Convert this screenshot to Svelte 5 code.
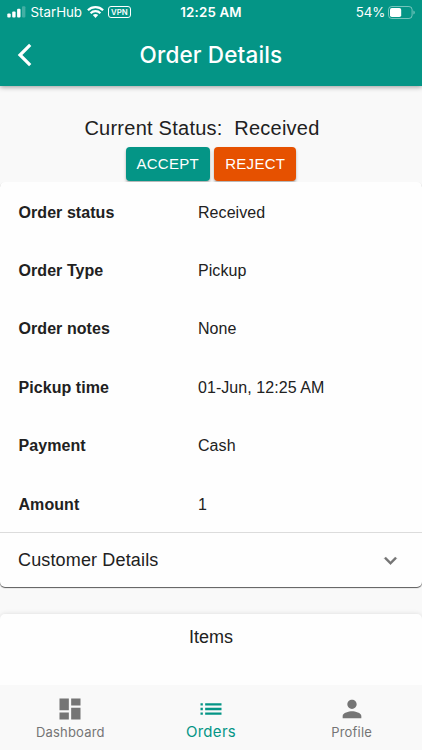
<script>
  const order = [
    { label: 'Order status', value: 'Received' },
    { label: 'Order Type', value: 'Pickup' },
    { label: 'Order notes', value: 'None' },
    { label: 'Pickup time', value: '01-Jun, 12:25 AM' },
    { label: 'Payment', value: 'Cash' },
    { label: 'Amount', value: '1' },
  ];

  let status = $state('Received');
</script>

<div class="app">
  <header>
    <div class="statusbar">
      <div class="carrier">
        <svg class="signal" width="19" height="12" viewBox="0 0 19 12" fill="#fff">
          <rect x="0.3" y="7.6" width="3.4" height="4" rx="1" />
          <rect x="5.2" y="5.4" width="3.4" height="6.2" rx="1" />
          <rect x="10.1" y="2.8" width="3.4" height="8.8" rx="1" />
          <rect x="15" y="0.2" width="3.4" height="11.4" rx="1" opacity="0.25" />
        </svg>
        <span class="network">StarHub</span>
        <svg class="wifi" width="17" height="12" viewBox="0 0 17 12" fill="none" stroke="#fff" stroke-width="2.2">
          <path d="M0.9 4.3C5.1 .1 11.9 .1 16.1 4.3" />
          <path d="M3.6 7.2C6.3 4.5 10.7 4.5 13.4 7.2" />
          <path d="M5.8 9.1L8.5 11.9L11.2 9.1C9.7 7.7 7.3 7.7 5.8 9.1Z" fill="#fff" stroke="none" />
        </svg>
        <span class="vpn">VPN</span>
      </div>
      <span class="clock">12:25 AM</span>
      <div class="battery">
        <span>54%</span>
        <svg width="28" height="13" viewBox="0 0 28 13">
          <rect x="0.5" y="0.5" width="23.6" height="12" rx="3.2" fill="none" stroke="#fff" stroke-opacity="0.45" />
          <rect x="2" y="2" width="11.2" height="9" rx="1.8" fill="#fff" />
          <path d="M25.4 4.4C27.3 5.1 27.3 7.9 25.4 8.6Z" fill="#fff" fill-opacity="0.45" />
        </svg>
      </div>
    </div>
    <div class="toolbar">
      <button class="back" aria-label="Back">
        <svg width="16" height="24" viewBox="0 0 16 24" fill="none" stroke="#fff" stroke-width="3.2">
          <path d="M13.2 1.8L3 12L13.2 22.2" />
        </svg>
      </button>
      <h1>Order Details</h1>
    </div>
  </header>

  <main>
    <section class="current">
      <h2>Current Status:&nbsp; {status}</h2>
      <div class="actions">
        <button class="accept" onclick={() => (status = 'Accepted')}>ACCEPT</button>
        <button class="reject" onclick={() => (status = 'Rejected')}>REJECT</button>
      </div>
    </section>

    <section class="card details">
      <dl>
        {#each order as row}
          <div class="row">
            <dt>{row.label}</dt>
            <dd>{row.value}</dd>
          </div>
        {/each}
      </dl>
      <div class="customer">
        <span>Customer Details</span>
        <svg width="25" height="25" viewBox="0 0 24 24" fill="#757575" stroke="#757575" stroke-width="0.4">
          <path d="M16.59 8.59L12 13.17 7.41 8.59 6 10l6 6 6-6z" />
        </svg>
      </div>
    </section>

    <section class="card items">
      <h3>Items</h3>
    </section>
  </main>

  <nav>
    <a href="#dashboard">
      <svg width="28" height="28" viewBox="0 0 24 24" fill="currentColor">
        <path d="M3 13h8V3H3v10zm0 8h8v-6H3v6zm10 0h8V11h-8v10zm0-18v6h8V3h-8z" />
      </svg>
      <span>Dashboard</span>
    </a>
    <a href="#orders" class="active">
      <svg width="28" height="28" viewBox="0 0 24 24" fill="currentColor">
        <path d="M3 13h2v-2H3v2zm0 4h2v-2H3v2zm0-8h2V7H3v2zm4 4h14v-2H7v2zm0 4h14v-2H7v2zM7 7v2h14V7H7z" />
      </svg>
      <span>Orders</span>
    </a>
    <a href="#profile">
      <svg width="28" height="28" viewBox="0 0 24 24" fill="currentColor">
        <path d="M12 12c2.21 0 4-1.79 4-4s-1.79-4-4-4-4 1.79-4 4 1.79 4 4 4zm0 2c-2.67 0-8 1.34-8 4v2h16v-2c0-2.66-5.33-4-8-4z" />
      </svg>
      <span>Profile</span>
    </a>
  </nav>
</div>

<style>
  :global(body) {
    margin: 0;
  }

  .app {
    display: flex;
    flex-direction: column;
    height: 750px;
    overflow: hidden;
    background: #f9f9f9;
    color: #212121;
    font-family: "Liberation Sans", Arial, sans-serif;
  }

  h1, h2, h3, dl, dd {
    margin: 0;
    font-weight: 400;
  }

  button {
    border: 0;
    padding: 0;
    font-family: inherit;
    color: #fff;
  }

  header {
    flex: none;
    height: 85.5px;
    background: #049586;
    color: #fff;
    font-family: Inter, sans-serif;
    box-shadow: 0 1px 5px rgba(0, 0, 0, 0.4);
  }

  .statusbar {
    display: grid;
    grid-template-columns: 1fr auto 1fr;
    align-items: center;
    height: 24px;
    padding: 0 6px 0 7px;
    font-size: 13.3px;
  }

  .carrier {
    display: flex;
    align-items: center;
  }

  .network {
    margin: 0 5px 0 4.5px;
  }

  .vpn {
    margin-left: 4px;
    padding: 0 2px;
    border: 1px solid #fff;
    border-radius: 3px;
    font-size: 7.8px;
    line-height: 10px;
    font-weight: 600;
  }

  .clock {
    margin-left: -1px;
    font-weight: 600;
    letter-spacing: 0.2px;
  }

  .battery {
    display: flex;
    align-items: center;
    justify-content: flex-end;
    gap: 3px;
  }

  .battery span {
    letter-spacing: -0.2px;
  }

  .toolbar {
    display: grid;
    grid-template-columns: 60px 1fr 60px;
    align-items: center;
    height: 61px;
  }

  .back {
    display: flex;
    padding-left: 17px;
    background: none;
  }

  h1 {
    text-align: center;
    font-size: 22.5px;
    font-weight: 500;
    letter-spacing: 0.15px;
  }

  main {
    flex: 1;
    display: flex;
    flex-direction: column;
    min-height: 0;
  }

  .current {
    height: 96.5px;
    box-sizing: border-box;
    padding-top: 30px;
    text-align: center;
  }

  h2 {
    margin-right: 18px;
    font-size: 20px;
    line-height: 25px;
    letter-spacing: 0.25px;
  }

  .actions {
    display: flex;
    justify-content: center;
    gap: 4.5px;
    padding-top: 6px;
  }

  .actions button {
    height: 34px;
    border-radius: 4px;
    font-size: 15px;
    letter-spacing: 0.3px;
    box-shadow: 0 2px 3px rgba(0, 0, 0, 0.3);
  }

  .accept {
    width: 84px;
    background: #049586;
  }

  .reject {
    width: 82px;
    background: #e65100;
  }

  .card {
    background: #fefefe;
    border-radius: 5px;
  }

  .details {
    box-shadow: 0 1px 1px rgba(0, 0, 0, 0.65);
  }

  .row {
    display: grid;
    grid-template-columns: 179.5px 1fr;
    align-items: center;
    box-sizing: border-box;
    height: 58.4px;
    padding: 3px 0 0 18.5px;
    font-size: 16px;
    letter-spacing: 0.06px;
  }

  dt {
    font-weight: 700;
  }

  .customer {
    display: flex;
    align-items: center;
    justify-content: space-between;
    height: 54px;
    padding: 0 19.5px 0 18px;
    border-top: 1px solid #dcdcdc;
    font-size: 18px;
    letter-spacing: 0.15px;
  }

  .items {
    flex: 1;
    margin-top: 27px;
    border-radius: 5px 5px 0 0;
    box-shadow: 0 0 5px rgba(0, 0, 0, 0.12);
  }

  h3 {
    padding-top: 12px;
    text-align: center;
    font-size: 18px;
    line-height: 22px;
  }

  nav {
    flex: none;
    display: grid;
    grid-template-columns: repeat(3, 1fr);
    height: 65px;
    background: #f9f9f9;
    font-family: Inter, sans-serif;
    position: relative;
  }

  nav a {
    display: flex;
    flex-direction: column;
    align-items: center;
    padding-top: 10px;
    color: #757575;
    font-size: 13px;
    line-height: 18px;
    letter-spacing: 0.2px;
    text-decoration: none;
  }

  nav .active {
    color: #049586;
    font-size: 15px;
    line-height: 17px;
    letter-spacing: 0.3px;
  }
</style>
